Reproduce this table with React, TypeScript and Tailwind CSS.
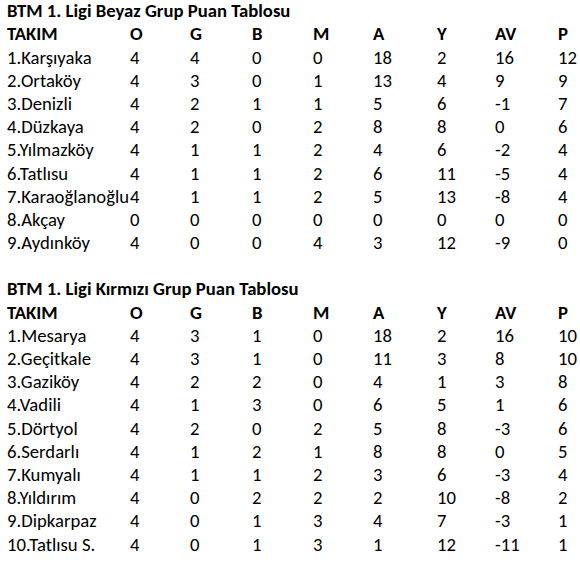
import React from "react";

type Row = [string, string, string, string, string, string, string, string, string];

const beyaz: Row[] = [
  ["1.Karşıyaka", "4", "4", "0", "0", "18", "2", "16", "12"],
  ["2.Ortaköy", "4", "3", "0", "1", "13", "4", "9", "9"],
  ["3.Denizli", "4", "2", "1", "1", "5", "6", "-1", "7"],
  ["4.Düzkaya", "4", "2", "0", "2", "8", "8", "0", "6"],
  ["5.Yılmazköy", "4", "1", "1", "2", "4", "6", "-2", "4"],
  ["6.Tatlısu", "4", "1", "1", "2", "6", "11", "-5", "4"],
  ["7.Karaoğlanoğlu", "4", "1", "1", "2", "5", "13", "-8", "4"],
  ["8.Akçay", "0", "0", "0", "0", "0", "0", "0", "0"],
  ["9.Aydınköy", "4", "0", "0", "4", "3", "12", "-9", "0"],
];

const kirmizi: Row[] = [
  ["1.Mesarya", "4", "3", "1", "0", "18", "2", "16", "10"],
  ["2.Geçitkale", "4", "3", "1", "0", "11", "3", "8", "10"],
  ["3.Gaziköy", "4", "2", "2", "0", "4", "1", "3", "8"],
  ["4.Vadili", "4", "1", "3", "0", "6", "5", "1", "6"],
  ["5.Dörtyol", "4", "2", "0", "2", "5", "8", "-3", "6"],
  ["6.Serdarlı", "4", "1", "2", "1", "8", "8", "0", "5"],
  ["7.Kumyalı", "4", "1", "1", "2", "3", "6", "-3", "4"],
  ["8.Yıldırım", "4", "0", "2", "2", "2", "10", "-8", "2"],
  ["9.Dipkarpaz", "4", "0", "1", "3", "4", "7", "-3", "1"],
  ["10.Tatlısu S.", "4", "0", "1", "3", "1", "12", "-11", "1"],
];

const header: Row = ["TAKIM", "O", "G", "B", "M", "A", "Y", "AV", "P"];

const gridCols = "grid grid-cols-[123px_60px_62px_61px_60px_64px_58px_63px_22px]";

function TableRow({ r, bold }: { r: Row; bold?: boolean }) {
  return (
    <div className={`${gridCols} h-[23.2px] items-center ${bold ? "font-bold" : ""}`}>
      {r.map((c, i) => (
        <div key={i} className="whitespace-nowrap leading-none">
          {c}
        </div>
      ))}
    </div>
  );
}

function Section({ title, rows }: { title: string; rows: Row[] }) {
  return (
    <div className="flex flex-col">
      <div className="h-[23.2px] flex items-center font-bold whitespace-nowrap leading-none">{title}</div>
      <TableRow r={header} bold />
      {rows.map((r, i) => (
        <TableRow key={i} r={r} />
      ))}
    </div>
  );
}

export default function App() {
  return (
    <div
      className="w-[580px] h-[563px] bg-white text-black pl-[7px] text-[18.7px] overflow-hidden"
      style={{ fontFamily: 'Carlito, Calibri, "Open Sans", sans-serif' }}
    >
      <Section title="BTM 1. Ligi Beyaz Grup Puan Tablosu" rows={beyaz} />
      <div className="h-[23.2px]" />
      <Section title="BTM 1. Ligi Kırmızı Grup Puan Tablosu" rows={kirmizi} />
    </div>
  );
}
